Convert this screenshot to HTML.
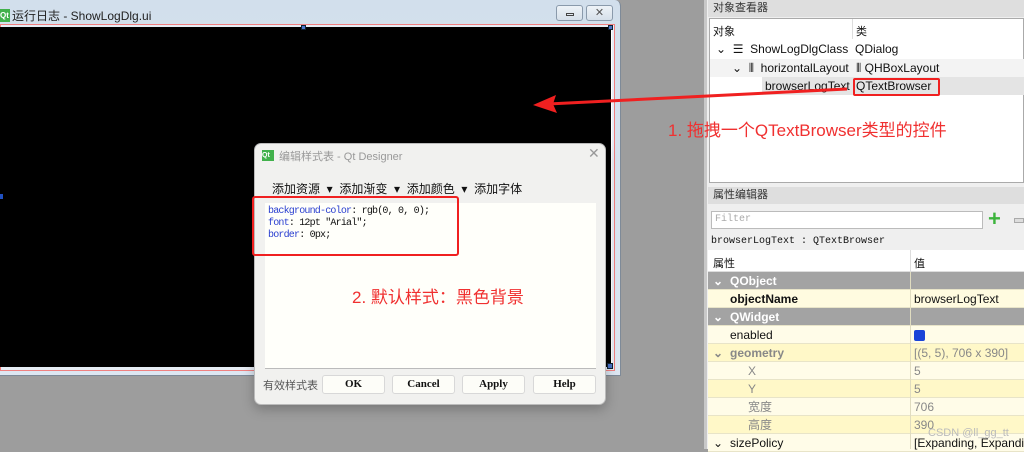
<!DOCTYPE html>
<html><head><meta charset="utf-8"><style>
*{margin:0;padding:0;box-sizing:border-box}
body{width:1024px;height:449px;overflow:hidden;background:#9d9d9d;position:relative;font-family:"Liberation Sans","Noto Sans CJK SC",sans-serif;font-size:12px;color:#111}
.a{position:absolute}
.mono{font-family:"Liberation Mono","Noto Sans CJK SC",monospace}
.row{position:absolute;left:708px;width:316px;height:18px;border-bottom:1px solid #e8e4c8;line-height:18px;font-size:12px}
.row span{position:absolute}
.btn{position:absolute;top:375px;height:19px;width:63px;background:#fdfdf8;border:1px solid #d8d8d8;border-radius:3px;text-align:center;line-height:17px;font-family:"Liberation Serif",serif;font-size:11px;font-weight:bold}
</style></head><body>
<div class="a" style="left:0;top:0;width:621px;height:376px;background:linear-gradient(#d2dfec,#dde7f2);border-right:1px solid #7e8a98;border-bottom:1px solid #7e8a98;border-radius:0 6px 0 0"></div>
<div class="a" style="left:0;top:9px;width:10px;height:13px;background:#41b14b;color:#fff;font-size:8px;font-weight:bold;line-height:13px">Qt</div>
<div class="a" style="left:12px;top:7px;font-size:12px;color:#222">运行日志 - ShowLogDlg.ui</div>
<div class="a" style="left:556px;top:5px;width:27px;height:16px;border:1px solid #8a9aab;border-radius:3px;background:linear-gradient(#eef3f8,#d6e0ea)"><div class="a" style="left:9px;top:7px;width:8px;height:3px;border:1px solid #444"></div></div>
<div class="a" style="left:586px;top:5px;width:27px;height:16px;border:1px solid #8a9aab;border-radius:3px;background:linear-gradient(#eef3f8,#d6e0ea);text-align:center;line-height:14px;color:#555;font-size:11px">✕</div>
<div class="a" style="left:0;top:24px;width:615px;height:347px;border:1px solid #f08080;background:#e7edf5"></div>
<div class="a" style="left:0;top:27px;width:612px;height:340px;background:#000;border-right:1px solid #fff"></div>
<div class="a" style="left:301px;top:25px;width:5px;height:5px;background:#4a73c8;border:1px solid #123"></div>
<div class="a" style="left:608px;top:25px;width:5px;height:5px;background:#4a73c8;border:1px solid #123"></div>
<div class="a" style="left:0;top:194px;width:3px;height:5px;background:#2050c0"></div>
<div class="a" style="left:607px;top:363px;width:6px;height:6px;background:#4a73c8;border:1px solid #123"></div>

<div class="a" style="left:254px;top:143px;width:352px;height:262px;background:#f1f1ef;border:1px solid #bbb;border-radius:7px;box-shadow:0 4px 12px rgba(0,0,0,.25)"></div>
<div class="a" style="left:262px;top:150px;width:12px;height:11px;background:#41b14b;color:#fff;font-size:7px;font-weight:bold;line-height:11px">Qt</div>
<div class="a" style="left:279px;top:148px;font-size:11px;color:#999">编辑样式表 - Qt Designer</div>
<div class="a" style="left:588px;top:145px;font-size:14px;color:#999">✕</div>
<div class="a" style="left:272px;top:180px;font-size:12px;color:#111;white-space:pre">添加资源  ▾  添加渐变  ▾  添加颜色  ▾  添加字体</div>
<div class="a" style="left:265px;top:203px;width:331px;height:166px;background:#fffffa;border-bottom:1px solid #bbb"></div>
<div class="a mono" style="left:268px;top:206px;font-size:10px;letter-spacing:-0.8px;line-height:12px;color:#111;white-space:pre"><span style="color:#2a3fd0">background-color</span>: rgb(0, 0, 0);
<span style="color:#2a3fd0">font</span>: 12pt "Arial";
<span style="color:#2a3fd0">border</span>: 0px;</div>
<div class="a" style="left:252px;top:196px;width:207px;height:60px;border:2px solid #f02020;border-radius:3px"></div>
<div class="a" style="left:352px;top:283px;font-size:17px;color:#f03030">2. 默认样式：黑色背景</div>
<div class="a" style="left:263px;top:377px;font-size:11px;color:#555">有效样式表</div>
<div class="btn" style="left:322px">OK</div>
<div class="btn" style="left:392px">Cancel</div>
<div class="btn" style="left:462px">Apply</div>
<div class="btn" style="left:533px">Help</div>

<div class="a" style="left:704px;top:0;width:320px;height:449px;background:#efefef;border-left:3px solid #c8c8c8"></div>
<div class="a" style="left:708px;top:0;width:316px;height:17px;background:#dedede;padding-left:5px;line-height:17px;font-size:11px;color:#333">对象查看器</div>
<div class="a" style="left:709px;top:18px;width:315px;height:165px;background:#fff;border:1px solid #aaa"></div>
<div class="a" style="left:852px;top:19px;width:1px;height:20px;background:#ddd"></div>
<div class="a" style="left:713px;top:23px;font-size:11px">对象</div>
<div class="a" style="left:856px;top:23px;font-size:11px">类</div>
<div class="a" style="left:716px;top:41px;font-size:12px;line-height:16px;white-space:pre">⌄  ☰  ShowLogDlgClass</div>
<div class="a" style="left:855px;top:41px;font-size:12px;line-height:16px">QDialog</div>
<div class="a" style="left:710px;top:59px;width:314px;height:18px;background:#f3f3f3"></div>
<div class="a" style="left:732px;top:60px;font-size:12px;line-height:16px;white-space:pre">⌄  ⦀  horizontalLayout</div>
<div class="a" style="left:856px;top:60px;font-size:12px;line-height:16px">⦀ QHBoxLayout</div>
<div class="a" style="left:762px;top:77px;width:262px;height:18px;background:#e4e4e4"></div>
<div class="a" style="left:765px;top:78px;font-size:12px;line-height:16px">browserLogText</div>
<div class="a" style="left:856px;top:78px;font-size:12px;line-height:16px">QTextBrowser</div>
<div class="a" style="left:853px;top:78px;width:87px;height:18px;border:2px solid #f02020;border-radius:2px"></div>
<div class="a" style="left:668px;top:116px;font-size:17px;color:#f03030">1. 拖拽一个QTextBrowser类型的控件</div>
<svg class="a" style="left:0;top:0" width="1024" height="449"><line x1="847" y1="89" x2="548" y2="104" stroke="#f02020" stroke-width="3"/><polygon points="533,105 556,95 553,104 557,113" fill="#f02020"/></svg>
<div class="a" style="left:708px;top:187px;width:316px;height:17px;background:#dedede;padding-left:5px;line-height:17px;font-size:11px;color:#333">属性编辑器</div>
<div class="a mono" style="left:711px;top:211px;width:272px;height:18px;background:#fff;border:1px solid #bbb;font-size:10px;line-height:16px;padding-left:3px;color:#aaa">Filter</div>
<div class="a" style="left:988px;top:209px;font-size:22px;font-weight:bold;color:#3cb43c;line-height:20px">+</div>
<div class="a" style="left:1014px;top:218px;width:10px;height:5px;background:#ddd;border:1px solid #aaa"></div>
<div class="a mono" style="left:711px;top:236px;font-size:10px;color:#111">browserLogText : QTextBrowser</div>
<div class="a" style="left:708px;top:250px;width:316px;height:22px;background:#fff;border-bottom:1px solid #ddd"></div>
<div class="a" style="left:910px;top:250px;width:1px;height:22px;background:#ddd"></div>
<div class="a" style="left:713px;top:255px;font-size:11px">属性</div>
<div class="a" style="left:914px;top:255px;font-size:11px">值</div>
<div class="row" style="top:272px;background:#a3a3a3;color:#fff;font-weight:bold"><span style="left:5px">⌄</span><span style="left:22px">QObject</span></div>
<div class="row" style="top:290px;background:#fffbe0;font-weight:bold"><span style="left:22px">objectName</span><span style="left:206px;font-weight:normal">browserLogText</span></div>
<div class="row" style="top:308px;background:#a3a3a3;color:#fff;font-weight:bold"><span style="left:5px">⌄</span><span style="left:22px">QWidget</span></div>
<div class="row" style="top:326px;background:#fffce8"><span style="left:22px">enabled</span><span style="left:206px;top:4px;width:11px;height:11px;background:#1a44d8;border-radius:2px"></span></div>
<div class="row" style="top:344px;background:#fff8c8;color:#888;font-weight:bold"><span style="left:5px">⌄</span><span style="left:22px">geometry</span><span style="left:206px;font-weight:normal">[(5, 5), 706 x 390]</span></div>
<div class="row" style="top:362px;background:#fffce8;color:#888"><span style="left:40px">X</span><span style="left:206px">5</span></div>
<div class="row" style="top:380px;background:#fff8c8;color:#888"><span style="left:40px">Y</span><span style="left:206px">5</span></div>
<div class="row" style="top:398px;background:#fffce8;color:#888"><span style="left:40px">宽度</span><span style="left:206px">706</span></div>
<div class="row" style="top:416px;background:#fff8c8;color:#888"><span style="left:40px">高度</span><span style="left:206px">390</span></div>
<div class="row" style="top:434px;background:#fffce8"><span style="left:5px">⌄</span><span style="left:22px">sizePolicy</span><span style="left:206px;white-space:nowrap">[Expanding, Expanding</span></div>
<div class="a" style="left:910px;top:272px;width:1px;height:177px;background:#e0dcc0"></div>
<div class="a" style="left:928px;top:427px;font-size:11px;color:#bbb">CSDN @ll_gg_tt</div>
</body></html>
